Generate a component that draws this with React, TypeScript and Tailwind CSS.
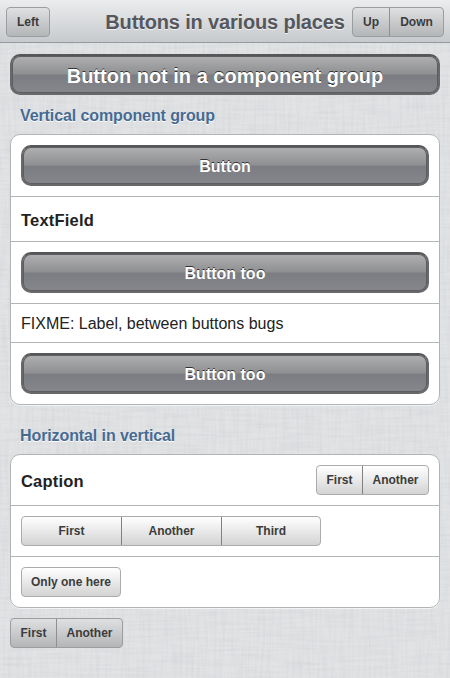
import type { ReactNode } from "react";

function Linen() {
  return (
    <svg className="absolute inset-0 -z-10 h-full w-full" aria-hidden="true">
      <defs>
        <filter id="weft" x="0" y="0" width="100%" height="100%">
          <feTurbulence type="fractalNoise" baseFrequency="0.025 0.35" numOctaves="2" seed="4" />
          <feColorMatrix values="0 0 0 0 0.4  0 0 0 0 0.42  0 0 0 0 0.45  0.28 0 0 0 -0.11" />
        </filter>
        <filter id="warp" x="0" y="0" width="100%" height="100%">
          <feTurbulence type="fractalNoise" baseFrequency="0.35 0.025" numOctaves="2" seed="9" />
          <feColorMatrix values="0 0 0 0 0.4  0 0 0 0 0.42  0 0 0 0 0.45  0.28 0 0 0 -0.11" />
        </filter>
      </defs>
      <rect width="100%" height="100%" filter="url(#weft)" />
      <rect width="100%" height="100%" filter="url(#warp)" />
    </svg>
  );
}

function BigButton({ children, large = false }: { children: ReactNode; large?: boolean }) {
  return (
    <button
      className={`block h-[41px] w-full rounded-[10px] border-2 border-t-[#555658] border-x-[#69696b] border-b-[#69696b] bg-[linear-gradient(#b0b0b2_0%,#8f9092_48%,#7c7d82_52%,#86878c_100%)] text-center font-bold text-white shadow-[inset_0_0_0_1px_#5c5d60] [text-shadow:0_-1px_0_#333] ${
        large ? "text-[20px] leading-[41px]" : "text-[16px] leading-[40px]"
      }`}
    >
      {children}
    </button>
  );
}

type Tone = "light" | "dark";

function SmallButtons({ labels, widths, tone = "light" }: { labels: string[]; widths: string[]; tone?: Tone }) {
  return (
    <div
      className={`flex h-[30px] w-fit shrink-0 overflow-hidden rounded-[4px] border text-[12px] font-bold text-[#3b3c3c] ${
        tone === "light"
          ? "border-[#a9abad] bg-[linear-gradient(#ffffff,#d3d3d4)] [text-shadow:0_1px_0_#fff]"
          : "border-[#9b9ea1] bg-[linear-gradient(#dfe0e2,#b4b5b7)] [text-shadow:0_1px_0_#d8d9da]"
      }`}
    >
      {labels.map((label, i) => (
        <button
          key={label}
          className={`h-full whitespace-nowrap text-center leading-[28px] ${widths[i]} ${
            i > 0 ? (tone === "light" ? "border-l border-[#808183]" : "border-l border-[#8d9093]") : ""
          }`}
        >
          {label}
        </button>
      ))}
    </div>
  );
}

function Heading({ children }: { children: ReactNode }) {
  return (
    <h2 className="pl-[10px] text-[16px] leading-[22px] font-bold tracking-[-0.1px] text-[#466a92] [text-shadow:0_1px_0_#fff]">
      {children}
    </h2>
  );
}

function Group({ children }: { children: ReactNode }) {
  return (
    <section className="divide-y divide-[#b3b4b6] overflow-hidden rounded-[10px] border border-[#b3b4b6] bg-white shadow-[0_1px_0_#f2f3f4]">
      {children}
    </section>
  );
}

export default function App() {
  return (
    <div className="relative isolate h-[678px] w-[450px] overflow-hidden bg-[#e2e3e5] font-['Liberation_Sans',Arial,sans-serif] text-[#222]">
      <Linen />
      <header className="flex h-[43px] items-start border-b border-[#96999d] bg-[linear-gradient(#ebecee,#c7cacd)] px-[6px] pt-[7px]">
        <div className="flex flex-1 justify-start">
          <SmallButtons labels={["Left"]} widths={["w-[42px]"]} tone="dark" />
        </div>
        <h1 className="text-[20px] leading-[30px] font-bold tracking-[-0.16px] whitespace-nowrap text-[#54575d] [text-shadow:0_1px_0_#eee]">
          Buttons in various places
        </h1>
        <div className="flex flex-1 justify-end">
          <SmallButtons labels={["Up", "Down"]} widths={["w-[36px]", "w-[54px]"]} tone="dark" />
        </div>
      </header>
      <main className="px-[10px] pt-[11px]">
        <BigButton large>Button not in a component group</BigButton>
        <div className="pt-[10px] pb-[7px]">
          <Heading>Vertical component group</Heading>
        </div>
        <Group>
          <div className="h-[62px] p-[10px]">
            <BigButton>Button</BigButton>
          </div>
          <div className="h-[45px] px-[10px] text-[16.5px] leading-[47px] font-bold tracking-[0.2px]">TextField</div>
          <div className="h-[62px] p-[10px]">
            <BigButton>Button too</BigButton>
          </div>
          <div className="h-[39px] px-[10px] text-[16px] leading-[40px]">FIXME: Label, between buttons bugs</div>
          <div className="h-[61px] p-[10px]">
            <BigButton>Button too</BigButton>
          </div>
        </Group>
        <div className="pt-5 pb-[7px]">
          <Heading>Horizontal in vertical</Heading>
        </div>
        <Group>
          <div className="flex h-[51px] items-start justify-between p-[10px]">
            <span className="text-[16.5px] leading-[33px] font-bold tracking-[0.2px]">Caption</span>
            <SmallButtons labels={["First", "Another"]} widths={["w-[45px]", "w-[66px]"]} />
          </div>
          <div className="h-[51px] p-[10px]">
            <SmallButtons labels={["First", "Another", "Third"]} widths={["w-[99px]", "w-[100px]", "w-[99px]"]} />
          </div>
          <div className="h-[50px] p-[10px]">
            <SmallButtons labels={["Only one here"]} widths={["w-[98px]"]} />
          </div>
        </Group>
        <div className="pt-[10px]">
          <SmallButtons labels={["First", "Another"]} widths={["w-[45px]", "w-[66px]"]} tone="dark" />
        </div>
      </main>
    </div>
  );
}
